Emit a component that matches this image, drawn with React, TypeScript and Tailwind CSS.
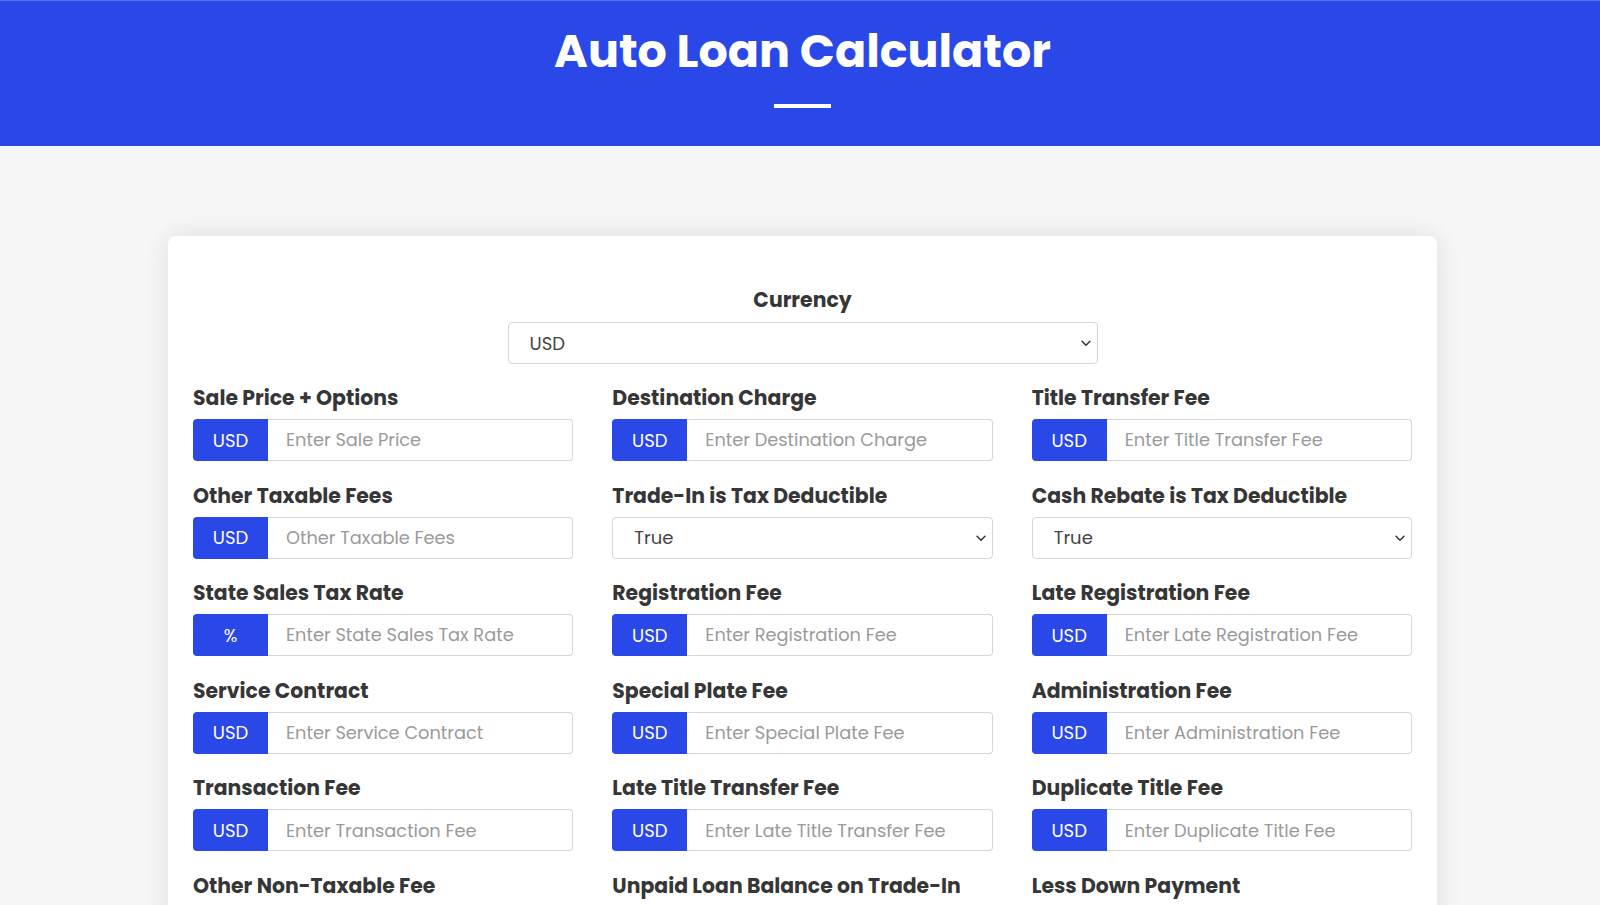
import React from 'react';

type Field =
  | { label: string; kind: 'input'; addon: string; placeholder: string }
  | { label: string; kind: 'select'; value: string };

const fields: Field[] = [
  { label: 'Sale Price + Options', kind: 'input', addon: 'USD', placeholder: 'Enter Sale Price' },
  { label: 'Destination Charge', kind: 'input', addon: 'USD', placeholder: 'Enter Destination Charge' },
  { label: 'Title Transfer Fee', kind: 'input', addon: 'USD', placeholder: 'Enter Title Transfer Fee' },
  { label: 'Other Taxable Fees', kind: 'input', addon: 'USD', placeholder: 'Other Taxable Fees' },
  { label: 'Trade-In is Tax Deductible', kind: 'select', value: 'True' },
  { label: 'Cash Rebate is Tax Deductible', kind: 'select', value: 'True' },
  { label: 'State Sales Tax Rate', kind: 'input', addon: '%', placeholder: 'Enter State Sales Tax Rate' },
  { label: 'Registration Fee', kind: 'input', addon: 'USD', placeholder: 'Enter Registration Fee' },
  { label: 'Late Registration Fee', kind: 'input', addon: 'USD', placeholder: 'Enter Late Registration Fee' },
  { label: 'Service Contract', kind: 'input', addon: 'USD', placeholder: 'Enter Service Contract' },
  { label: 'Special Plate Fee', kind: 'input', addon: 'USD', placeholder: 'Enter Special Plate Fee' },
  { label: 'Administration Fee', kind: 'input', addon: 'USD', placeholder: 'Enter Administration Fee' },
  { label: 'Transaction Fee', kind: 'input', addon: 'USD', placeholder: 'Enter Transaction Fee' },
  { label: 'Late Title Transfer Fee', kind: 'input', addon: 'USD', placeholder: 'Enter Late Title Transfer Fee' },
  { label: 'Duplicate Title Fee', kind: 'input', addon: 'USD', placeholder: 'Enter Duplicate Title Fee' },
  { label: 'Other Non-Taxable Fee', kind: 'input', addon: 'USD', placeholder: 'Enter Other Non-Taxable Fee' },
  { label: 'Unpaid Loan Balance on Trade-In', kind: 'input', addon: 'USD', placeholder: 'Enter Unpaid Loan Balance' },
  { label: 'Less Down Payment', kind: 'input', addon: 'USD', placeholder: 'Enter Down Payment' },
];

function Chevron() {
  return (
    <svg className="w-[14px] h-[14px] text-[#333]" viewBox="0 0 16 16" fill="none" stroke="currentColor">
      <path strokeLinecap="round" strokeLinejoin="round" strokeWidth="1.7" d="M3.5 6l4.5 4.5L12.5 6" />
    </svg>
  );
}

function SelectBox({ value, className = '' }: { value: string; className?: string }) {
  return (
    <div
      className={`h-[42px] flex items-center justify-between pl-[21px] pr-[4px] bg-white border border-[#d6d6d6] rounded-[4px] text-[18px] text-[#444] ${className}`}
    >
      <span>{value}</span>
      <Chevron />
    </div>
  );
}

function FieldBox({ field }: { field: Field }) {
  return (
    <div className="flex flex-col">
      <label className="text-[20.4px] leading-[28px] font-bold text-[#363636] mb-[7px] whitespace-nowrap">
        {field.label}
      </label>
      {field.kind === 'select' ? (
        <SelectBox value={field.value} />
      ) : (
        <div className="flex h-[42px]">
          <div className="w-[75px] flex items-center justify-center bg-[#2a47e8] text-white text-[18px] rounded-l-[4px]">
            {field.addon}
          </div>
          <div className="flex-1 flex items-center pl-[18px] pt-[1px] bg-white border border-l-0 border-[#d6d6d6] rounded-r-[4px] text-[17.8px] text-[#9a9a9a] whitespace-nowrap overflow-hidden">
            {field.placeholder}
          </div>
        </div>
      )}
    </div>
  );
}

export default function App() {
  return (
    <div className="min-h-screen bg-[#f7f7f7] font-['Poppins',Inter,'Noto_Sans',sans-serif]">
      <header className="h-[146px] bg-[#2a47e8] border-t border-[#5a74f0] flex flex-col items-center pl-[5px]">
        <h1 className="mt-[21px] text-[46px] leading-[58px] font-bold text-white">
          Auto Loan Calculator
        </h1>
        <div className="mt-[24px] w-[57px] h-[4px] bg-white" />
      </header>

      <main className="pt-[90px] pl-[168px] pr-[163px] pb-10">
        <div className="bg-white rounded-[8px] shadow-[0_0_28px_rgba(0,0,0,0.11)] px-[25px] pt-[50px] pb-10">
          <div className="flex flex-col items-center">
            <div className="text-[20.4px] leading-[28px] font-bold text-[#363636] mb-[8px]">Currency</div>
            <SelectBox value="USD" className="w-[590px]" />
          </div>

          <div className="mt-[20px] grid grid-cols-3 gap-x-[39px] gap-y-[20.6px]">
            {fields.map((f) => (
              <FieldBox key={f.label} field={f} />
            ))}
          </div>
        </div>
      </main>
    </div>
  );
}
